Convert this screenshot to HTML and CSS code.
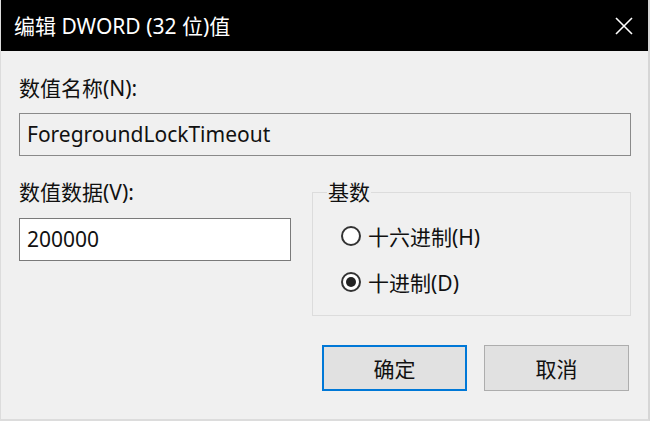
FILE: index.html
```html
<!DOCTYPE html>
<html lang="zh-CN">
<head>
<meta charset="utf-8">
<title>编辑 DWORD (32 位)值</title>
<link rel="stylesheet" href="styles.css">
</head>
<body>
<div class="window">
  <div class="titlebar">
    <span class="title">编辑 DWORD (32 位)值</span>
    <span class="close" aria-label="关闭">
      <svg width="18" height="18" viewBox="0 0 18 18"><path d="M1 1 L17 17 M17 1 L1 17" stroke="#fff" stroke-width="1.6" fill="none"/></svg>
    </span>
  </div>
  <div class="content">
    <div class="label">数值名称(N):</div>
    <div class="field readonly">ForegroundLockTimeout</div>
    <div class="row">
      <div class="col-left">
        <div class="label">数值数据(V):</div>
        <div class="field data">200000</div>
      </div>
      <fieldset class="group">
        <legend>基数</legend>
        <div class="radios">
          <div class="radio"><span class="dot"></span><span>十六进制(H)</span></div>
          <div class="radio"><span class="dot checked"></span><span>十进制(D)</span></div>
        </div>
      </fieldset>
    </div>
    <div class="buttons">
      <div class="btn default">确定</div>
      <div class="btn">取消</div>
    </div>
  </div>
</div>
</body>
</html>
```

FILE: styles.css
```css
html, body {
  margin: 0;
  padding: 0;
  background: #f0f0f0;
}
body {
  font-family: "Noto Sans", "Noto Sans CJK SC", sans-serif;
  font-size: 21px;
  color: #111;
}
.window {
  width: 650px;
  height: 421px;
  box-sizing: border-box;
  background: #f0f0f0;
  border-left: 1px solid #dcdcdc;
  border-right: 2px solid #d6d6d6;
  border-bottom: 2px solid #dcdcdc;
  overflow: hidden;
}
.titlebar {
  height: 51px;
  background: #000;
  display: flex;
  align-items: center;
  justify-content: space-between;
  padding: 0 17px 0 13px;
  margin-right: -2px;
}
.title {
  color: #fff;
  font-size: 21px;
  line-height: 24px;
}
.close {
  display: flex;
  width: 18px;
  height: 18px;
}
.content {
  padding: 25px 17px 0 18px;
}
.label {
  line-height: 24px;
  height: 24px;
}
.field {
  box-sizing: border-box;
  height: 43px;
  border: 1px solid #7f7f7f;
  padding: 0 7px;
  line-height: 41px;
}
.readonly {
  margin-top: 13px;
  background: #f0f0f0;
  border-color: #8a8a8a;
}
.row {
  display: flex;
  gap: 21px;
  margin-top: 24px;
}
.col-left {
  width: 272px;
}
.data {
  margin-top: 14px;
  background: #fff;
  border-color: #7a7a7a;
}
.group {
  margin: 3px 0 0;
  width: 319px;
  box-sizing: border-box;
  min-width: 0;
  border: 1px solid #dcdcdc;
  padding: 21px 0 19px 14px;
}
.group legend {
  padding: 0 1px;
  line-height: 18px;
}
.radios {
  display: flex;
  flex-direction: column;
  gap: 18px;
  padding-left: 14px;
}
.radio {
  display: flex;
  align-items: center;
  gap: 7px;
  height: 28px;
}
.dot {
  box-sizing: border-box;
  width: 20px;
  height: 20px;
  border: 2px solid #333;
  border-radius: 50%;
  background: #fff;
  display: flex;
  align-items: center;
  justify-content: center;
}
.dot.checked::after {
  content: "";
  width: 10px;
  height: 10px;
  border-radius: 50%;
  background: #222;
}
.buttons {
  display: flex;
  justify-content: flex-end;
  gap: 17px;
  margin-top: 29px;
  padding-right: 2px;
}
.btn {
  box-sizing: border-box;
  width: 145px;
  height: 46px;
  background: #e1e1e1;
  border: 1px solid #adadad;
  display: flex;
  align-items: center;
  justify-content: center;
}
.btn.default {
  border: 2px solid #0078d7;
}
```
